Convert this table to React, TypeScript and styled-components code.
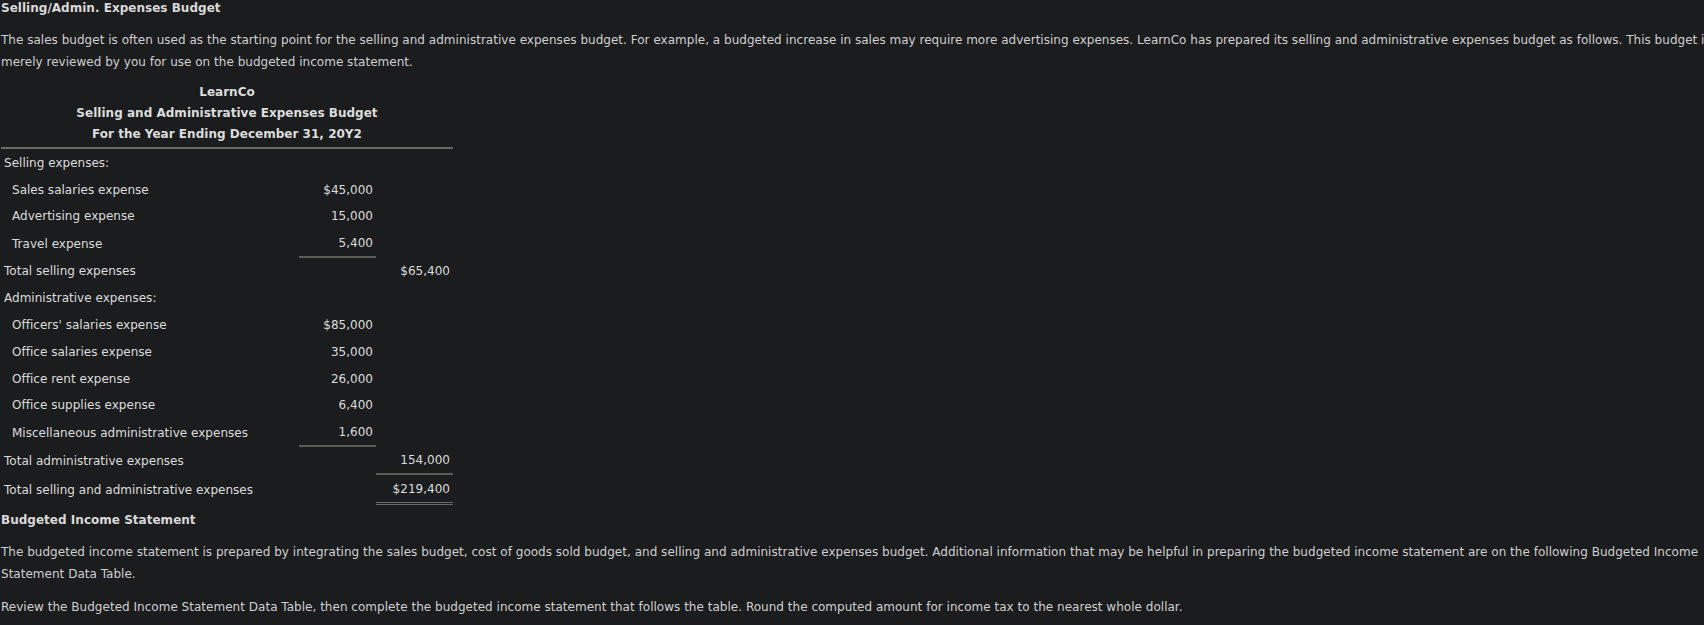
import React from 'react';
import styled, { createGlobalStyle } from 'styled-components';

const GlobalStyle = createGlobalStyle`
  html, body {
    margin: 0;
    padding: 0;
    background: #1b1c1e;
    overflow: hidden;
  }
  body {
    font-family: "DejaVu Sans", Verdana, sans-serif;
    font-size: 12px;
    color: #d2d2d2;
  }
`;

type Rule = 'single' | 'double';

interface Line {
  label: string;
  indent?: boolean;
  first?: string;
  second?: string;
  firstRule?: Rule;
  secondRule?: Rule;
}

const lines: Line[] = [
  { label: 'Selling expenses:' },
  { label: 'Sales salaries expense', indent: true, first: '$45,000' },
  { label: 'Advertising expense', indent: true, first: '15,000' },
  { label: 'Travel expense', indent: true, first: '5,400', firstRule: 'single' },
  { label: 'Total selling expenses', second: '$65,400' },
  { label: 'Administrative expenses:' },
  { label: "Officers' salaries expense", indent: true, first: '$85,000' },
  { label: 'Office salaries expense', indent: true, first: '35,000' },
  { label: 'Office rent expense', indent: true, first: '26,000' },
  { label: 'Office supplies expense', indent: true, first: '6,400' },
  { label: 'Miscellaneous administrative expenses', indent: true, first: '1,600', firstRule: 'single' },
  { label: 'Total administrative expenses', second: '154,000', secondRule: 'single' },
  { label: 'Total selling and administrative expenses', second: '$219,400', secondRule: 'double' },
];

const ruleSize = (rule?: Rule) => (rule === 'double' ? 3 : rule === 'single' ? 1.4 : 0);

const App = () => (
  <Page>
    <GlobalStyle />
    <Heading>Selling/Admin. Expenses Budget</Heading>
    <Paragraph>
      The sales budget is often used as the starting point for the selling and administrative expenses budget. For example, a budgeted increase in sales may require more advertising expenses. LearnCo has prepared its selling and administrative expenses budget as follows. This budget is merely reviewed by you for use on the budgeted income statement.
    </Paragraph>
    <Budget>
      <thead>
        <tr>
          <TitleCell colSpan={3}>
            <div>LearnCo</div>
            <div>Selling and Administrative Expenses Budget</div>
            <div>For the Year Ending December 31, 20Y2</div>
          </TitleCell>
        </tr>
      </thead>
      <tbody>
        {lines.map((line) => {
          const extra = Math.max(ruleSize(line.firstRule), ruleSize(line.secondRule));
          return (
            <tr key={line.label}>
              <LabelCell $indent={line.indent} $extra={extra}>{line.label}</LabelCell>
              <AmountCell $rule={line.firstRule}>{line.first}</AmountCell>
              <AmountCell $rule={line.secondRule}>{line.second}</AmountCell>
            </tr>
          );
        })}
      </tbody>
    </Budget>
    <SubHeading>Budgeted Income Statement</SubHeading>
    <Paragraph>
      The budgeted income statement is prepared by integrating the sales budget, cost of goods sold budget, and selling and administrative expenses budget. Additional information that may be helpful in preparing the budgeted income statement are on the following Budgeted Income Statement Data Table.
    </Paragraph>
    <Paragraph $gap={11}>
      Review the Budgeted Income Statement Data Table, then complete the budgeted income statement that follows the table. Round the computed amount for income tax to the nearest whole dollar.
    </Paragraph>
  </Page>
);

const Page = styled.div`
  width: 1712px;
  padding: 0 1px;
  box-sizing: border-box;
  letter-spacing: 0.02px;
`;

const Heading = styled.h3`
  margin: 0;
  font-size: 12px;
  font-weight: bold;
  line-height: 17px;
  color: #d8d8d8;
`;

const SubHeading = styled(Heading)`
  margin-top: 7px;
`;

const Paragraph = styled.p<{ $gap?: number }>`
  margin: ${(p) => p.$gap ?? 12}px 0 0;
  line-height: 22px;
  color: #cfcfcf;
`;

const Budget = styled.table`
  margin-top: 9px;
  width: 452px;
  border-collapse: separate;
  border-spacing: 0;
  color: #dcdcdc;
`;

const TitleCell = styled.th`
  padding: 0 0 2px;
  text-align: center;
  font-weight: bold;
  line-height: 21px;
  border-bottom: 2px solid #6a6a66;
`;

const LabelCell = styled.td<{ $indent?: boolean; $extra: number }>`
  box-sizing: border-box;
  height: ${(p) => 26.8 + p.$extra}px;
  padding: 1px 0 0 ${(p) => (p.$indent ? '11px' : '3px')};
  white-space: nowrap;
`;

const AmountCell = styled.td<{ $rule?: Rule }>`
  width: 74px;
  padding: 1px 3px 0 0;
  text-align: right;
  white-space: nowrap;
  border-bottom: ${(p) => (p.$rule === 'double' ? '3px double #6a6a66' : p.$rule === 'single' ? '2px solid #5a5a56' : 'none')};
`;

export default App;
